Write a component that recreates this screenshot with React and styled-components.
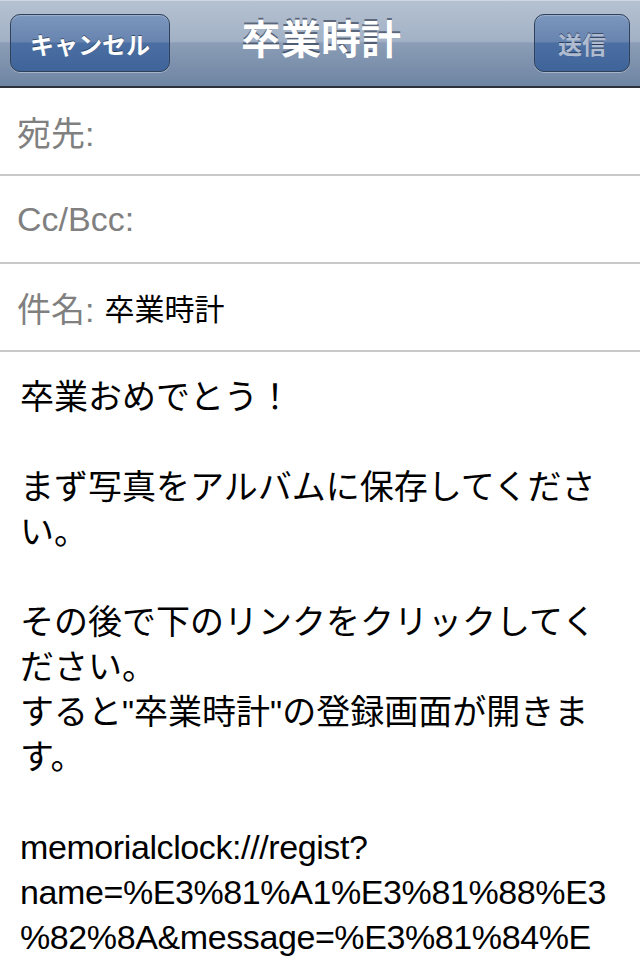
import React from 'react';
import styled, { createGlobalStyle } from 'styled-components';

const GlobalStyle = createGlobalStyle`
    html, body {
        margin: 0;
        padding: 0;
        background: #ffffff;
    }
    body {
        font-family: "Liberation Sans", "Noto Sans CJK JP", sans-serif;
        width: 640px;
        overflow: hidden;
    }
`

const Screen = styled.div`
    width: 640px;
    height: 960px;
    background: #ffffff;
    overflow: hidden;
`

const NavBar = styled.div`
    height: 86px;
    border-bottom: 2px solid #2b3039;
    display: grid;
    grid-template-columns: 1fr auto 1fr;
    align-items: center;
    padding: 0 10px;
    background: linear-gradient(
        to bottom,
        #b6c2d2 0%,
        #a2b1c5 48%,
        #8b9db6 50%,
        #6e85a3 100%
    );
    box-shadow: inset 0 1px 0 #cdd6e2;
`

const NavButton = styled.div`
    justify-self: ${props => props.right ? 'end' : 'start'};
    height: 58px;
    width: ${props => props.width}px;
    box-sizing: border-box;
    border: 1px solid #2f405a;
    border-radius: 10px;
    display: flex;
    align-items: center;
    justify-content: center;
    font-family: "Liberation Sans", "Noto Sans CJK JP", sans-serif;
    font-size: 24px;
    font-weight: bold;
    color: ${props => props.disabled ? '#aebbd0' : '#ffffff'};
    text-shadow: 0 -1px 0 rgba(0, 0, 0, 0.45);
    background: linear-gradient(
        to bottom,
        #7c97bd 0%,
        #6784b0 48%,
        #4b6fa3 50%,
        #3f6499 100%
    );
    box-shadow: 0 1px 0 rgba(255, 255, 255, 0.35), inset 0 1px 1px rgba(255, 255, 255, 0.25);
`

const Title = styled.div`
    font-family: "Noto Sans CJK JP", sans-serif;
    font-size: 40px;
    font-weight: bold;
    color: #ffffff;
    text-shadow: 0 -2px 0 rgba(40, 50, 70, 0.6);
    margin: -12px -2px 0 0;
`

const FieldRow = styled.div`
    height: 86px;
    border-bottom: 2px solid #c9c9c9;
    display: flex;
    align-items: center;
    padding: 0 17px;
    font-size: 34px;
`

const Label = styled.span`
    color: #808080;
`

const Value = styled.span`
    color: #000000;
    margin-left: 10px;
    font-family: "Noto Sans CJK JP", sans-serif;
    font-size: 30px;
`

const Body = styled.div`
    padding: 23px 20px 0 20px;
    font-size: 34px;
    line-height: 45px;
    color: #000000;
    word-break: break-all;
`

const Para = styled.p`
    margin: 0 0 45px 0;
`

const LinkLine = styled.div`
    white-space: nowrap;
    letter-spacing: -0.4px;
`

const App = () => {
    return (
        <Screen>
            <GlobalStyle />
            <NavBar>
                <NavButton width={160}>キャンセル</NavButton>
                <Title>卒業時計</Title>
                <NavButton width={96} right disabled>送信</NavButton>
            </NavBar>
            <FieldRow><Label>宛先:</Label></FieldRow>
            <FieldRow><Label>Cc/Bcc:</Label></FieldRow>
            <FieldRow><Label>件名:</Label><Value>卒業時計</Value></FieldRow>
            <Body>
                <Para>卒業おめでとう！</Para>
                <Para>まず写真をアルバムに保存してください。</Para>
                <Para>
                    その後で下のリンクをクリックしてください。<br />
                    すると"卒業時計"の登録画面が開きます。
                </Para>
                <Para>
                    <LinkLine>memorialclock:///regist?</LinkLine>
                    <LinkLine>name=%E3%81%A1%E3%81%88%E3</LinkLine>
                    <LinkLine>%82%8A&amp;message=%E3%81%84%E</LinkLine>
                </Para>
            </Body>
        </Screen>
    );
}

export default App;
